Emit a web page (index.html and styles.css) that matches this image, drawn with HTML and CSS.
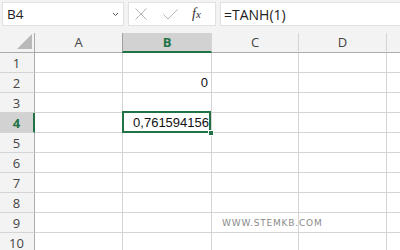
FILE: index.html
```html
<!DOCTYPE html>
<html>
<head>
<meta charset="utf-8">
<link rel="stylesheet" href="styles.css">
</head>
<body>
<div class="topbar">
  <div class="namebox">
    <span class="name">B4</span>
    <svg class="chev" width="7" height="5" viewBox="0 0 7 5"><path d="M1 1 L3.5 3.5 L6 1" fill="none" stroke="#555" stroke-width="1"/></svg>
  </div>
  <div class="fbuttons">
    <svg width="12" height="12" viewBox="0 0 12 12"><path d="M0.5 0.5 L11.5 11.5 M11.5 0.5 L0.5 11.5" stroke="#b4b4b4" stroke-width="1" fill="none"/></svg>
    <svg width="15" height="11" viewBox="0 0 15 11"><path d="M0.5 5.5 L5 10 L14.5 0.5" stroke="#b4b4b4" stroke-width="1" fill="none"/></svg>
    <span class="fx"><i>f</i><span class="x">x</span></span>
  </div>
  <div class="formula">=TANH(1)</div>
</div>
<div class="grid">
  <div class="corner"><span class="tri"></span></div>
  <div class="ch">A</div>
  <div class="ch sel">B</div>
  <div class="ch">C</div>
  <div class="ch">D</div>
  <div class="ch last"></div>

  <div class="rh">1</div><div class="c"></div><div class="c"></div><div class="c"></div><div class="c"></div><div class="c last"></div>
  <div class="rh">2</div><div class="c"></div><div class="c num">0</div><div class="c"></div><div class="c"></div><div class="c last"></div>
  <div class="rh">3</div><div class="c"></div><div class="c"></div><div class="c"></div><div class="c"></div><div class="c last"></div>
  <div class="rh sel">4</div><div class="c"></div><div class="c num active">0,761594156<span class="handle"></span></div><div class="c"></div><div class="c"></div><div class="c last"></div>
  <div class="rh">5</div><div class="c"></div><div class="c"></div><div class="c"></div><div class="c"></div><div class="c last"></div>
  <div class="rh">6</div><div class="c"></div><div class="c"></div><div class="c"></div><div class="c"></div><div class="c last"></div>
  <div class="rh">7</div><div class="c"></div><div class="c"></div><div class="c"></div><div class="c"></div><div class="c last"></div>
  <div class="rh">8</div><div class="c"></div><div class="c"></div><div class="c"></div><div class="c"></div><div class="c last"></div>
  <div class="rh">9</div><div class="c"></div><div class="c"></div><div class="c wm">WWW.STEMKB.COM</div><div class="c"></div><div class="c last"></div>
  <div class="rh">10</div><div class="c"></div><div class="c"></div><div class="c"></div><div class="c"></div><div class="c last"></div>
</div>
</body>
</html>
```
FILE: styles.css
```css
* { box-sizing: border-box; }
html, body { margin: 0; padding: 0; background: #fff; overflow: hidden; }
body { width: 400px; height: 250px; font-family: "Open Sans", "Noto Sans", sans-serif; }

.topbar {
  height: 33px;
  background: #f3f3f3;
  display: flex;
  padding: 2px 0 0 2px;
  gap: 4px;
}
.namebox {
  width: 122px;
  height: 24px;
  background: #fff;
  border: 1px solid #e1e1e1;
  display: flex;
  align-items: center;
  justify-content: space-between;
  padding: 0 4px 0 4px;
}
.name { font-size: 13.5px; color: #222; }
.chev { margin-top: 1px; }
.fbuttons {
  width: 88px;
  height: 24px;
  background: #fff;
  border: 1px solid #e1e1e1;
  display: flex;
  align-items: center;
  padding: 0 6px 0 6px;
  gap: 16px;
}
.fx { font-family: "Liberation Serif", serif; font-size: 14px; color: #333; margin-left: -2px; }
.fx i { font-style: italic; }
.fx .x { font-style: italic; font-size: 11px; }
.formula {
  flex: 1;
  height: 24px;
  background: #fff;
  border: 1px solid #e1e1e1;
  border-right: none;
  font-size: 14px;
  color: #222;
  padding: 2px 0 0 3px;
}

.grid {
  display: grid;
  grid-template-columns: 35px 88px 89px 87px 88px 1fr;
  grid-auto-rows: 20px;
}
.corner {
  background: #f3f3f3;
  border-right: 1px solid #ababab;
  border-bottom: 1px solid #ababab;
  position: relative;
}
.tri {
  position: absolute;
  right: 2px;
  bottom: 3px;
  width: 0; height: 0;
  border-left: 15px solid transparent;
  border-bottom: 15px solid #b9b9b9;
}
.ch {
  background: #f3f3f3;
  border-right: 1px solid #d4d4d4;
  border-bottom: 1px solid #ababab;
  font-size: 13px;
  color: #444;
  text-align: center;
  line-height: 19px;
}
.ch.sel {
  background: #d2d2d2;
  color: #217346;
  font-weight: 700;
  border-bottom: 2px solid #217346;
  border-left: 1px solid #a0a0a0;
  margin-left: -1px;
}
.ch.last, .c.last { border-right: none; }
.rh {
  background: #f3f3f3;
  border-right: 1px solid #ababab;
  border-bottom: 1px solid #d4d4d4;
  font-size: 13px;
  color: #444;
  text-align: center;
  line-height: 20px;
  padding-right: 1px;
}
.rh.sel {
  background: #d2d2d2;
  color: #217346;
  font-weight: 700;
  border-right: 2px solid #217346;
  padding-right: 0;
}
.c {
  border-right: 1px solid #d4d4d4;
  border-bottom: 1px solid #d4d4d4;
  font-family: "Liberation Sans", sans-serif;
  font-size: 13px;
  color: #111;
  line-height: 20px;
}
.num { text-align: right; padding-right: 3px; }
.active { position: relative; padding-right: 2px; }
.active::after {
  content: "";
  position: absolute;
  left: -1px; top: -2px; right: 0; bottom: -1px;
  border: 2px solid #217346;
}
.handle {
  position: absolute;
  right: -3px;
  bottom: -4px;
  width: 6px;
  height: 6px;
  background: #217346;
  border: 1px solid #fff;
  z-index: 2;
}
.wm {
  font-family: "DejaVu Sans", sans-serif;
  font-size: 9px;
  letter-spacing: 0.8px;
  color: #8a8a8a;
  padding-left: 10px;
  line-height: 20px;
  white-space: nowrap;
  overflow: visible;
}
```
